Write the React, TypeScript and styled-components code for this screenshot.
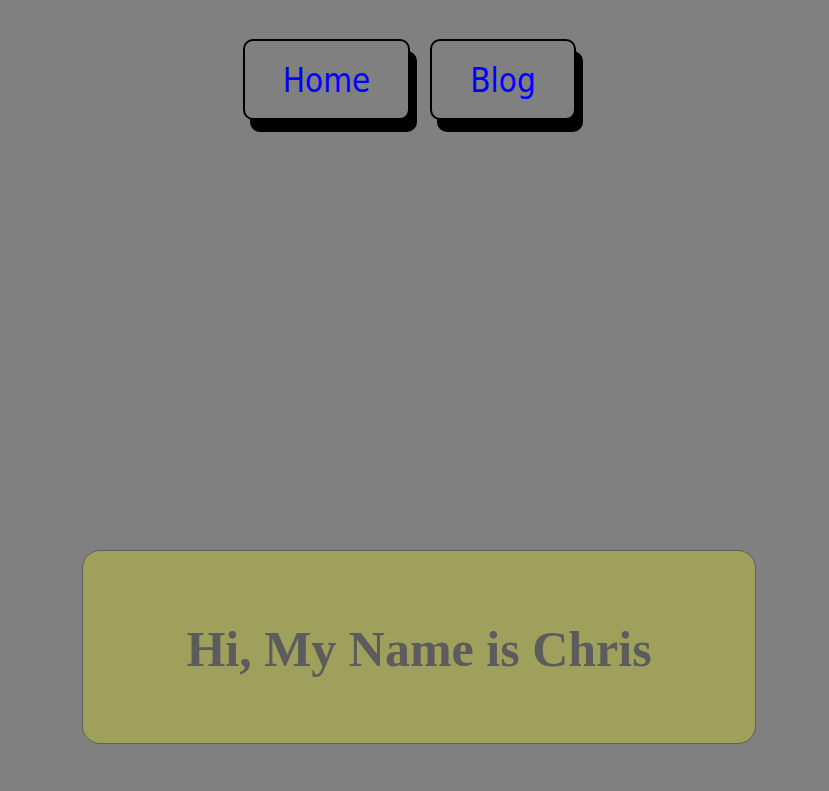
import React from "react";
import styled, { createGlobalStyle } from "styled-components";

const Global = createGlobalStyle`
  html, body {
    margin: 0;
    padding: 0;
    background: #808080;
  }
  body {
    font-family: "Liberation Serif", serif;
  }
`;

const Page = styled.div`
  width: 829px;
  height: 791px;
  display: flex;
  flex-direction: column;
  box-sizing: border-box;
  padding-top: 39px;
`;

const Nav = styled.nav`
  display: flex;
  justify-content: center;
  gap: 20px;
  padding-right: 10px;
`;

const NavButton = styled.a<{ $w: number }>`
  box-sizing: border-box;
  width: ${(p) => p.$w}px;
  height: 81px;
  display: flex;
  align-items: center;
  justify-content: center;
  border: 2px solid #000;
  border-radius: 10px;
  box-shadow: 7px 12px 0 #000;
  background: #808080;
  color: #0000ff;
  text-decoration: none;
  font-family: "DejaVu Sans Condensed", "DejaVu Sans", sans-serif;
  font-size: 33px;
  padding-top: 2px;
`;

const Card = styled.section`
  box-sizing: border-box;
  margin: 430px 0 0 82px;
  width: 674px;
  height: 194px;
  background: #9fa05b;
  border: 1px solid #5e5e5e;
  border-radius: 18px;
  display: flex;
  align-items: center;
  justify-content: center;
`;

const Title = styled.h1`
  margin: 0;
  font-family: "Liberation Serif", "Times New Roman", serif;
  font-weight: bold;
  font-size: 50px;
  color: #5c5c5c;
  padding-top: 4px;
`;

export default function App() {
  return (
    <>
      <Global />
      <Page>
        <Nav>
          <NavButton $w={167} href="#">Home</NavButton>
          <NavButton $w={146} href="#">Blog</NavButton>
        </Nav>
        <Card>
          <Title>Hi, My Name is Chris</Title>
        </Card>
      </Page>
    </>
  );
}
